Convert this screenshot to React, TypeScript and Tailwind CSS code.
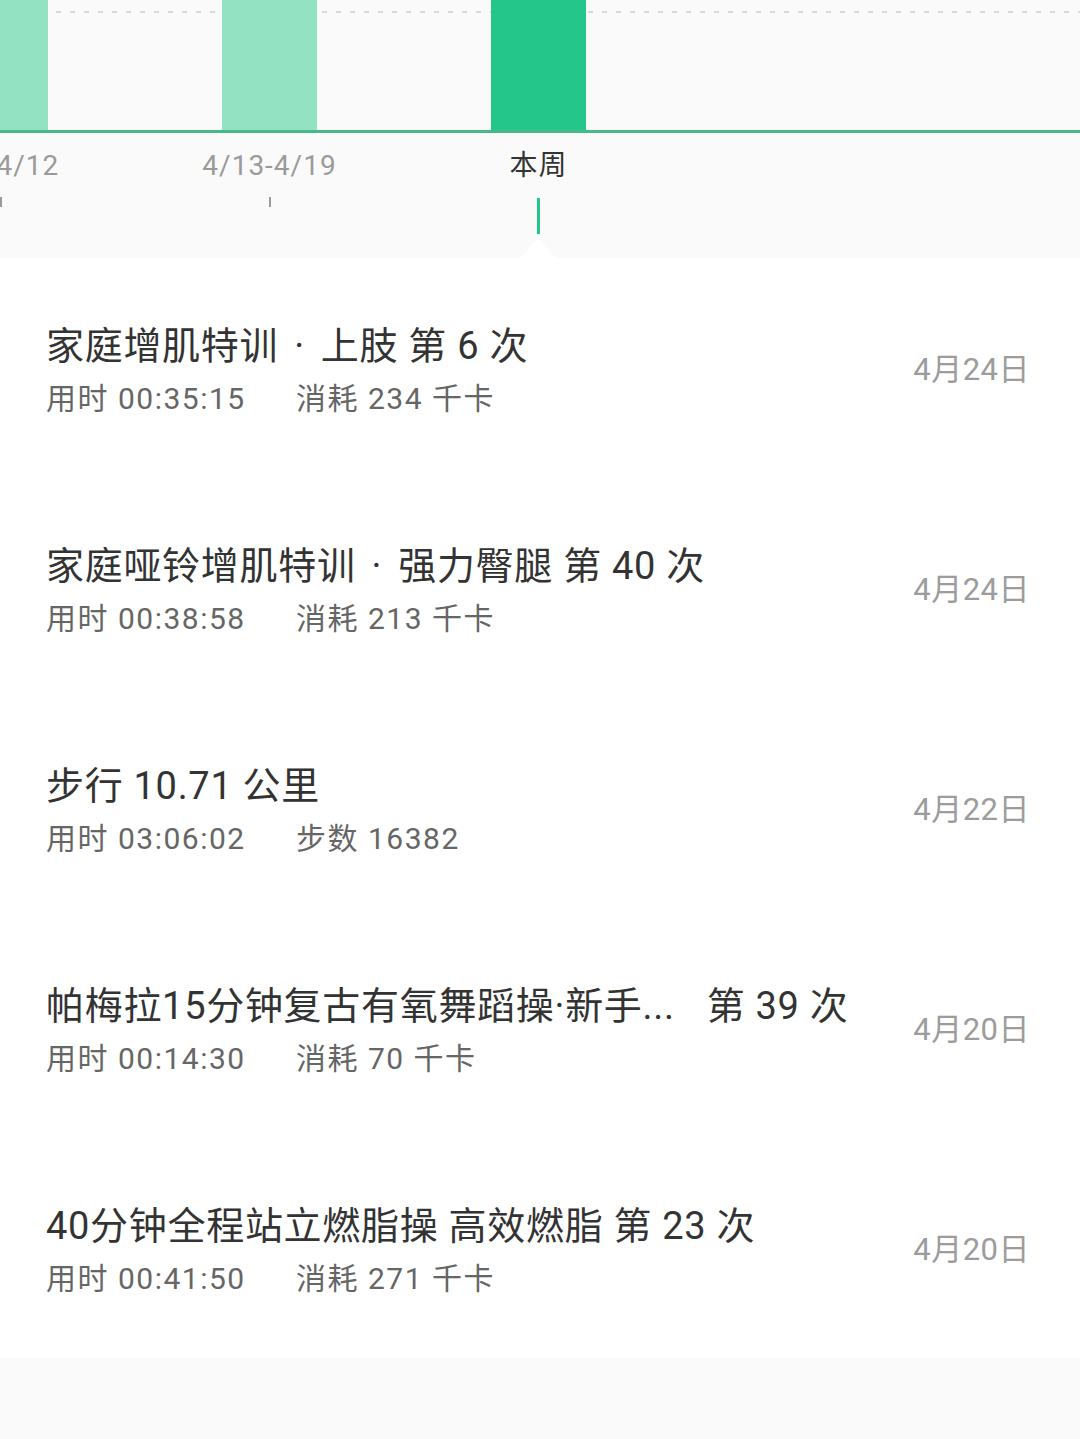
import React from "react";

const items = [
  { title: "家庭增肌特训 · 上肢 第 6 次", a: "用时 00:35:15", b: "消耗 234 千卡", date: "4月24日" },
  { title: "家庭哑铃增肌特训 · 强力臀腿 第 40 次", a: "用时 00:38:58", b: "消耗 213 千卡", date: "4月24日" },
  { title: "步行 10.71 公里", a: "用时 03:06:02", b: "步数 16382", date: "4月22日" },
  { title: "帕梅拉15分钟复古有氧舞蹈操·新手...", extra: "第 39 次", a: "用时 00:14:30", b: "消耗 70 千卡", date: "4月20日" },
  { title: "40分钟全程站立燃脂操 高效燃脂 第 23 次", a: "用时 00:41:50", b: "消耗 271 千卡", date: "4月20日" },
];

const cols = [
  { label: "4/6-4/12", bar: "light" },
  { label: "4/13-4/19", bar: "light" },
  { label: "本周", bar: "dark" },
  { label: "", bar: "none" },
  { label: "", bar: "none" },
];

function Title({ text }: { text: string }) {
  const parts = text.split(" · ");
  if (parts.length === 1) return <>{text}</>;
  return (
    <>
      {parts[0]}
      <span className="mx-[16px]">·</span>
      {parts[1]}
    </>
  );
}

export default function App() {
  return (
    <div
      className="min-h-[1439px] w-[1080px] bg-[#fafafa] overflow-hidden"
      style={{ fontFamily: 'Roboto, "Noto Sans CJK SC", sans-serif' }}
    >
      {/* chart */}
      <div className="relative h-[258px] bg-[#fafafa] overflow-hidden">
        <div className="relative h-[130px]">
          <div className="absolute left-0 right-0 top-[11px] h-[2px] bg-[repeating-linear-gradient(90deg,#d9d9d9_0_5px,transparent_5px_14px)]" />
          <div className="relative flex h-full -ml-[134px]">
            {cols.map((c, i) => (
              <div key={i} className="w-[269px] shrink-0 flex justify-center h-full">
                {c.bar === "light" && <div className="w-[95px] h-full bg-[#93e2c2]" />}
                {c.bar === "dark" && <div className="w-[95px] h-full bg-[#24c68a]" />}
              </div>
            ))}
          </div>
        </div>
        <div className="h-[3px] bg-[#47b88b]" />
        <div className="flex -ml-[134px]">
          {cols.map((c, i) => (
            <div key={i} className="w-[269px] shrink-0 flex flex-col items-center">
              <div
                className={`h-[36px] mt-[15px] text-[28px] leading-[36px] tracking-[1px] ${
                  i === 2 ? "text-[#333333]" : "text-[#9a9a9a]"
                }`}
              >
                {c.label}
              </div>
              {c.label &&
                (i === 2 ? (
                  <div className="mt-[14px] w-[3px] h-[36px] bg-[#24c68a]" />
                ) : (
                  <div className="mt-[13px] w-[2px] h-[10px] bg-[#9a9a9a]" />
                ))}
            </div>
          ))}
        </div>
        <div className="absolute bottom-0 left-[520px] w-0 h-0 border-l-[18px] border-r-[18px] border-b-[20px] border-l-transparent border-r-transparent border-b-white" />
      </div>

      {/* list */}
      <div className="bg-white">
        {items.map((it, i) => (
          <div key={i} className="h-[220px] flex items-center justify-between pl-[46px] pr-[50px]">
            <div className="flex flex-col pt-[6px]">
              <div className="text-[38px] leading-[50px] tracking-[0.7px] text-[#333333] whitespace-pre">
                <Title text={it.title} />
                {it.extra && <span className="ml-[32px]">{it.extra}</span>}
              </div>
              <div className="mt-[6px] text-[30px] leading-[44px] tracking-[1.5px] text-[#666666] flex">
                <span className="w-[250px] shrink-0">{it.a}</span>
                <span>{it.b}</span>
              </div>
            </div>
            <div className="text-[31px] leading-[40px] tracking-[0.5px] text-[#9c9c9c] pt-[4px]">{it.date}</div>
          </div>
        ))}
      </div>
    </div>
  );
}
